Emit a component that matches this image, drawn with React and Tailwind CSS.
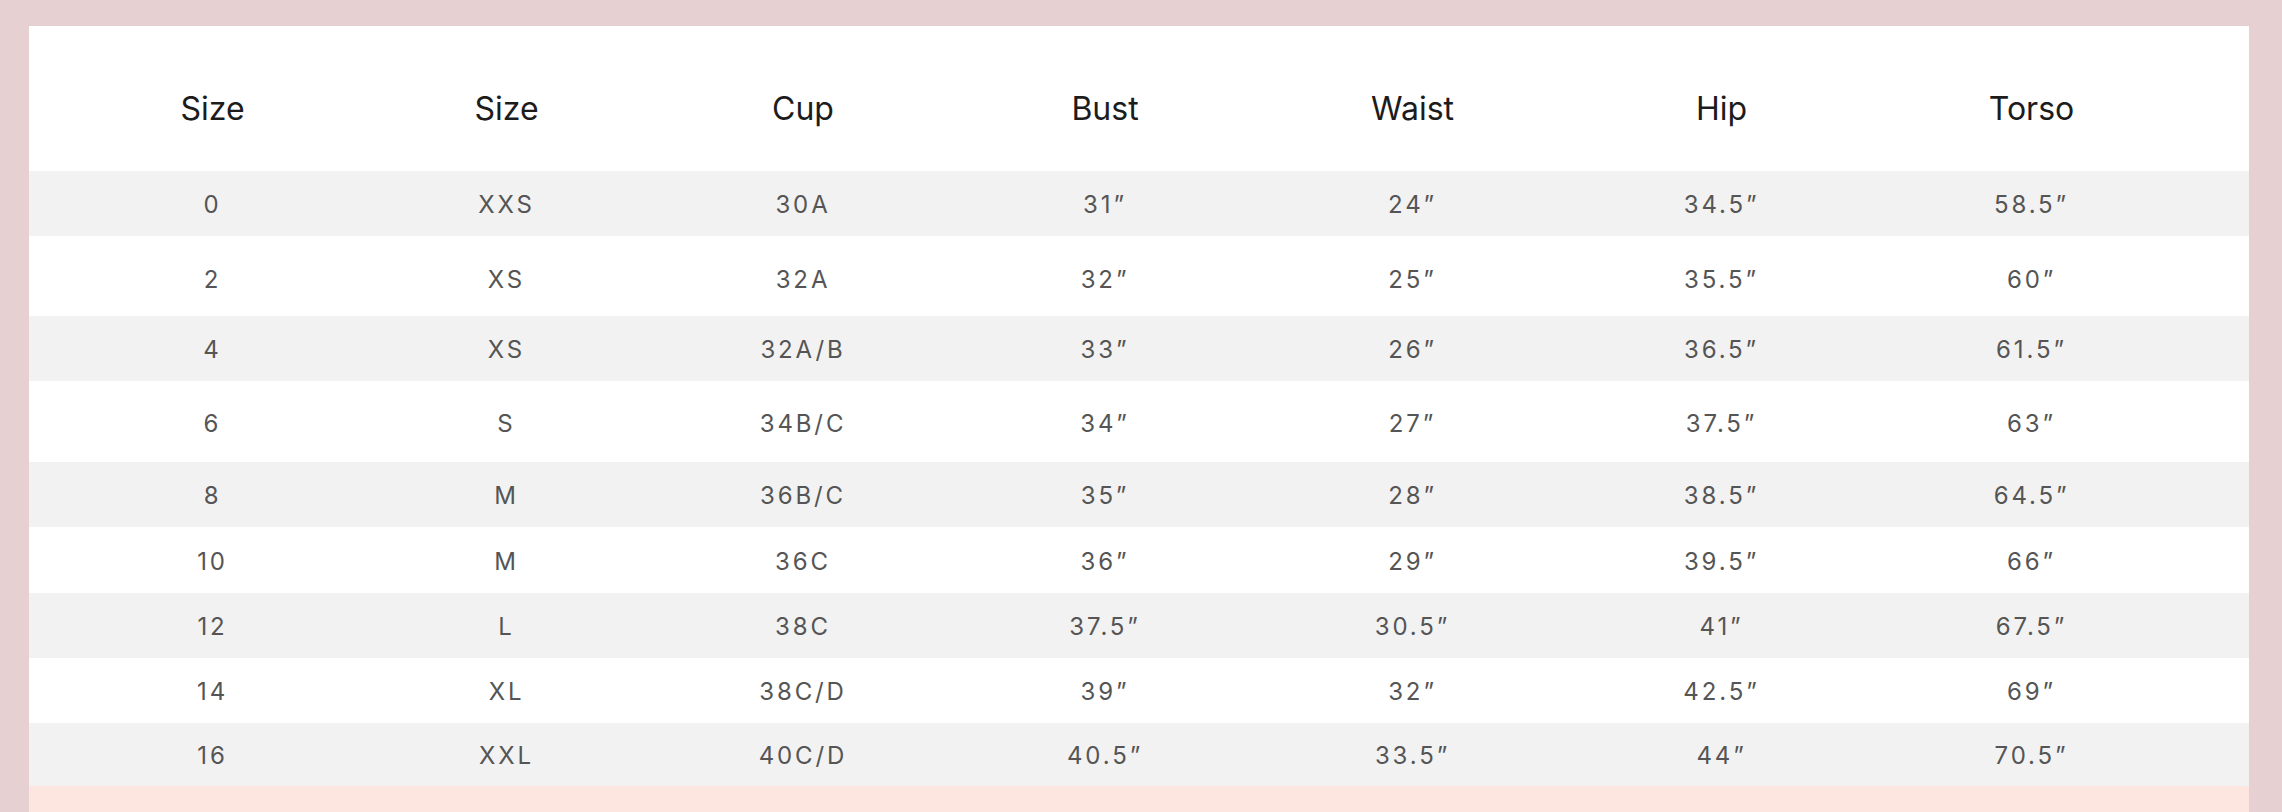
import React from "react";

const headers = ["Size", "Size", "Cup", "Bust", "Waist", "Hip", "Torso"];

const rows = [
  { h: "h-[65px] pt-[3px]", bg: "bg-[#f2f2f2]", cells: ["0", "XXS", "30A", "31”", "24”", "34.5”", "58.5”"] },
  { h: "h-[80px] pt-[8px]", bg: "bg-white", cells: ["2", "XS", "32A", "32”", "25”", "35.5”", "60”"] },
  { h: "h-[65px] pt-[3px]", bg: "bg-[#f2f2f2]", cells: ["4", "XS", "32A/B", "33”", "26”", "36.5”", "61.5”"] },
  { h: "h-[81px] pt-[4px]", bg: "bg-white", cells: ["6", "S", "34B/C", "34”", "27”", "37.5”", "63”"] },
  { h: "h-[65px] pt-[3px]", bg: "bg-[#f2f2f2]", cells: ["8", "M", "36B/C", "35”", "28”", "38.5”", "64.5”"] },
  { h: "h-[66px] pt-[3px]", bg: "bg-white", cells: ["10", "M", "36C", "36”", "29”", "39.5”", "66”"] },
  { h: "h-[65px] pt-[3px]", bg: "bg-[#f2f2f2]", cells: ["12", "L", "38C", "37.5”", "30.5”", "41”", "67.5”"] },
  { h: "h-[65px] pt-[3px]", bg: "bg-white", cells: ["14", "XL", "38C/D", "39”", "32”", "42.5”", "69”"] },
  { h: "h-[63px] pt-[3px]", bg: "bg-[#f2f2f2]", cells: ["16", "XXL", "40C/D", "40.5”", "33.5”", "44”", "70.5”"] },
];

const gridCols =
  "grid grid-cols-[293px_295px_298px_306px_309px_309px_311px] pl-[37px] pr-[62px]";

export default function App() {
  return (
    <div
      className="h-[812px] w-[2282px] overflow-hidden bg-[#e6d0d1] pt-[26px] pl-[29px] pr-[33px]"
      style={{ fontFamily: "Inter, 'Noto Sans', sans-serif" }}
    >
      <div className="bg-white w-[2220px]">
        <div className={`${gridCols} h-[145px] items-center pt-[20px]`}>
          {headers.map((t, i) => (
            <div key={i} className="text-center text-[32px] leading-none text-[#1c1c1c] font-normal">
              {t}
            </div>
          ))}
        </div>
        {rows.map((r, ri) => (
          <div key={ri} className={`${gridCols} ${r.h} ${r.bg} items-center`}>
            {r.cells.map((c, ci) => (
              <div
                key={ci}
                className="text-center text-[24px] leading-none tracking-[0.12em] text-[#555555]"
              >
                {c}
              </div>
            ))}
          </div>
        ))}
        <div className="h-[60px] bg-[#fde6e0]" />
      </div>
    </div>
  );
}
